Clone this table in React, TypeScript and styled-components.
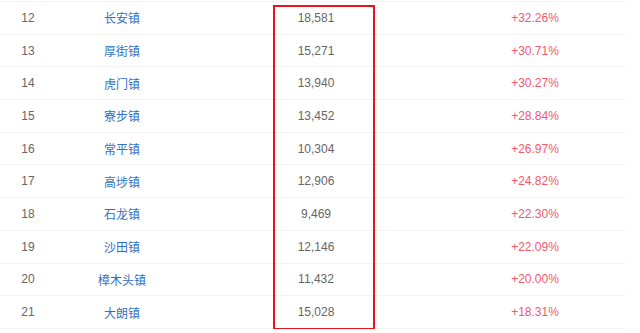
import React from 'react'
import styled, { createGlobalStyle } from 'styled-components';

const GlobalStyles = createGlobalStyle`
    html, body {
        margin: 0;
        padding: 0;
        background: #ffffff;
    }
    body {
        font-family: "Liberation Sans", "Noto Sans CJK SC", sans-serif;
        font-size: 12px;
    }
`;

const TableRoot = styled.div`
    position: relative;
    width: 626px;
    margin-top: 1px;
    border-top: 1px solid #f3f3f3;
`;

const Row = styled.div`
    display: grid;
    grid-template-columns: 56px 132px 256px 1fr;
    align-items: center;
    box-sizing: border-box;
    height: 32.7px;
    border-bottom: 1px solid #f3f3f3;
`;

const Cell = styled.div<{ $color?: string }>`
    text-align: center;
    color: ${props => props.$color || '#666666'};
    white-space: nowrap;
`;

// red annotation box drawn over the count column
const Highlight = styled.div`
    position: absolute;
    left: 273px;
    top: 3px;
    width: 102px;
    height: 325px;
    box-sizing: border-box;
    border: 2px solid #e8141b;
    pointer-events: none;
`;

const rows = [
    { rank: 12, town: '长安镇', count: '18,581', pct: '+32.26%' },
    { rank: 13, town: '厚街镇', count: '15,271', pct: '+30.71%' },
    { rank: 14, town: '虎门镇', count: '13,940', pct: '+30.27%' },
    { rank: 15, town: '寮步镇', count: '13,452', pct: '+28.84%' },
    { rank: 16, town: '常平镇', count: '10,304', pct: '+26.97%' },
    { rank: 17, town: '高埗镇', count: '12,906', pct: '+24.82%' },
    { rank: 18, town: '石龙镇', count: '9,469', pct: '+22.30%' },
    { rank: 19, town: '沙田镇', count: '12,146', pct: '+22.09%' },
    { rank: 20, town: '樟木头镇', count: '11,432', pct: '+20.00%' },
    { rank: 21, town: '大朗镇', count: '15,028', pct: '+18.31%' },
];

function App() {
    return (
        <>
            <GlobalStyles />
            <TableRoot>
                {rows.map(r => (
                    <Row key={r.rank}>
                        <Cell>{r.rank}</Cell>
                        <Cell $color="#2f6fc6">{r.town}</Cell>
                        <Cell>{r.count}</Cell>
                        <Cell $color="#f4596b">{r.pct}</Cell>
                    </Row>
                ))}
                <Highlight />
            </TableRoot>
        </>
    )
}

export default App;
